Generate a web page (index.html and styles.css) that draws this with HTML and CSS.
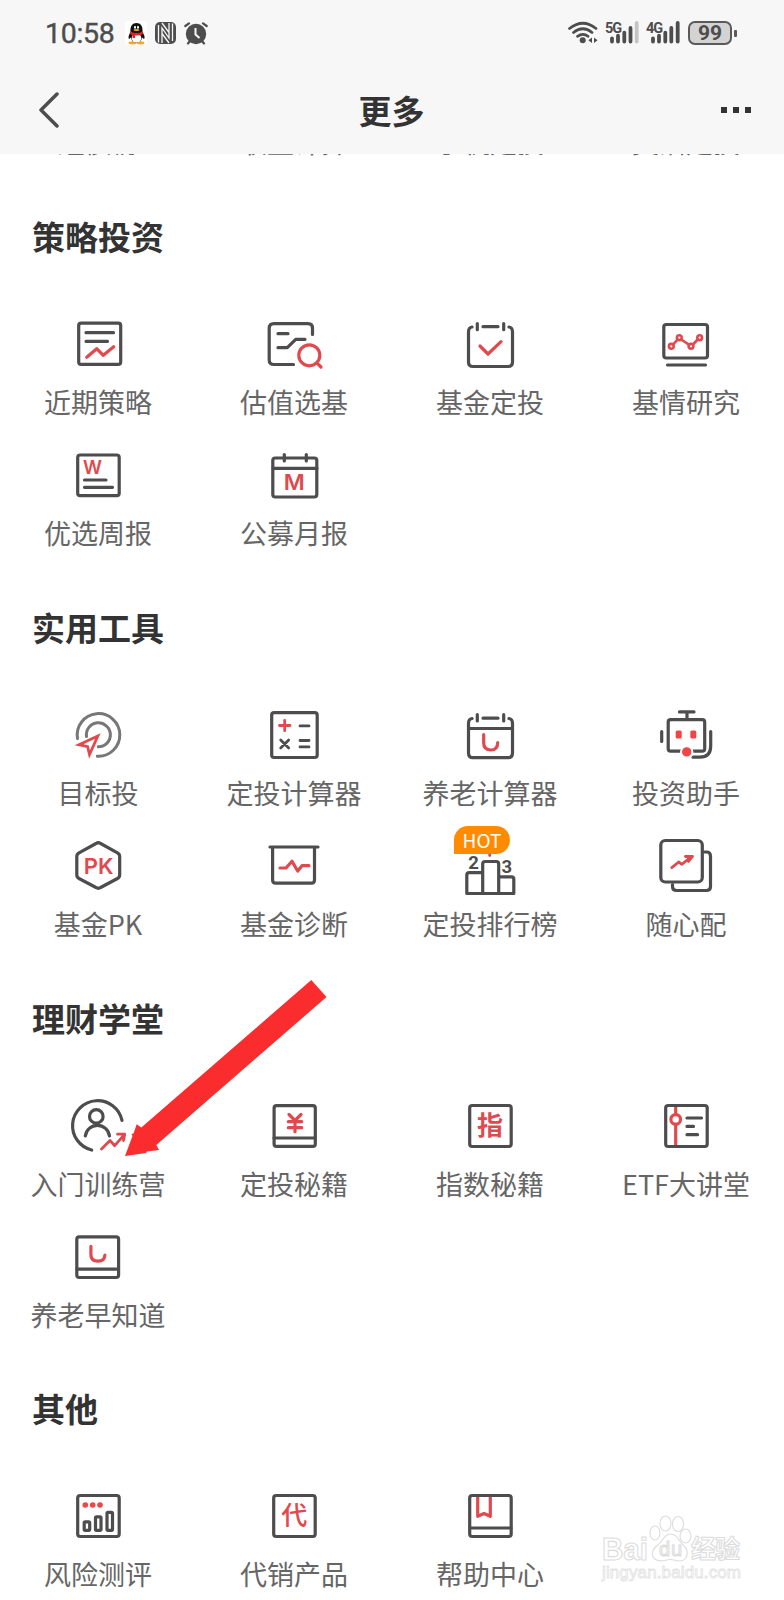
FILE: index.html
```html
<!DOCTYPE html>
<html lang="zh-CN">
<head>
    <meta charset="UTF-8">
    <meta name="viewport" content="width=device-width, initial-scale=1.0">
    <title>更多</title>
    <link rel="stylesheet" href="styles.css">
</head>
<body>
    <!-- 顶部：状态栏和标题栏 -->
    <div class="top">
        <div class="status">
            <span class="time">10:58</span>
            <svg class="qq" width="22" height="24" viewBox="0 0 22 24">
                <rect width="22" height="24" rx="4" fill="#fff"/>
                <ellipse cx="7.5" cy="21.8" rx="4" ry="1.6" fill="#f5a623"/>
                <ellipse cx="15.5" cy="21.8" rx="4" ry="1.6" fill="#f5a623"/>
                <path d="M5.5 11C5 5 7.500 2 11.500 2S18 5 17.500 11C20 15 20 17 19 18L17 16.500C16.500 20 14.500 21.500 11.500 21.500S6.500 20 6 16.500L4 18C3 17 3.500 14 5.500 11Z" fill="#111"/>
                <ellipse cx="11.500" cy="17" rx="4.800" ry="4.500" fill="#fff"/>
                <ellipse cx="10" cy="6.300" rx="1" ry="1.500" fill="#fff"/>
                <ellipse cx="13" cy="6.300" rx="1" ry="1.500" fill="#fff"/>
                <ellipse cx="11.500" cy="9" rx="3" ry="1" fill="#f5a623"/>
                <path d="M5.500 10.500Q11.500 14 17.500 10.500L18 13Q14 15 10 14.500V17H7.500V14L5 13Z" fill="#e32227"/>
            </svg>
            <svg class="nfc" width="21" height="22" viewBox="0 0 21 22">
                <rect width="21" height="22" rx="5" fill="#4d4d4d"/>
                <path d="M3.500 3V20.500M17.500 1.500V19M7 21V6L14 16V1M7 1L14 10.500M7 11.500L14 21" fill="none" stroke="#f7f7f7" stroke-width="1.300"/>
            </svg>
            <svg class="clock" width="24" height="23" viewBox="0 0 24 23">
                <circle cx="12" cy="12" r="10.200" fill="#4d4d4d"/>
                <path d="M1.300 4L5 1.300M22.700 4L19 1.300M4 21.500L6 19M20 21.500L18 19" stroke="#4d4d4d" stroke-width="2.200" stroke-linecap="round"/>
                <path d="M11.500 6V12.500L15.500 16" fill="none" stroke="#f7f7f7" stroke-width="2"/>
            </svg>
            <div class="status-right">
                <svg class="wifi" width="30" height="24" viewBox="0 0 30 24">
                    <g fill="none" stroke="#4d4d4d" stroke-width="2.700" stroke-linecap="round">
                        <path d="M1.500 7.500Q15 -3 28 7.500M5.500 11.500Q15 4 24 11.500M9.500 15.300Q15 11.300 20 15.300"/>
                    </g>
                    <circle cx="14.700" cy="19.300" r="3" fill="#4d4d4d"/>
                    <path d="M20.300 19.300L24 16.500V22ZM29.500 19.300L26 16.500V22Z" fill="#4d4d4d"/>
                </svg>
                <svg class="signal" width="34" height="24" viewBox="0 0 34 24">
                    <text x="0" y="12" class="net">5G</text>
                    <path d="M7 17.500V20.500M13 14.700V20.500M19.300 11.700V20.500M25.500 7V20.500" class="bar"/>
                    <path d="M31.700 2V20.500" class="bar bar-off"/>
                </svg>
                <svg class="signal" width="34" height="24" viewBox="0 0 34 24">
                    <text x="0" y="12" class="net">4G</text>
                    <path d="M7 17.500V20.500M13 14.700V20.500M19.300 11.700V20.500M25.300 7V20.500M31.700 2V20.500" class="bar"/>
                </svg>
                <div class="battery">99</div>
                <div class="battery-cap"></div>
            </div>
        </div>
        <div class="nav">
            <svg class="back" width="20" height="36" viewBox="0 0 20 36">
                <path d="M18 2L2 18L18 34" fill="none" stroke="#4d4d4d" stroke-width="3.500" stroke-linecap="round" stroke-linejoin="round"/>
            </svg>
            <h1>更多</h1>
            <div class="dots"><i></i><i></i><i></i></div>
        </div>
    </div>

    <!-- 可滚动的内容区 -->
    <div class="main">
        <div class="peek">
            <span>短债榜</span>
            <span>收益计算</span>
            <span>手机定投</span>
            <span>灵活定投</span>
        </div>

        <div class="section">
            <h2>策略投资</h2>
            <div class="grid">
                <div class="item">
                    <svg class="icon" viewBox="0 0 64 64">
                        <rect x="12.700" y="11.200" width="42" height="41.200" rx="2.500"/>
                        <path d="M20 20.700H47.500M20 29.300H41.500"/>
                        <path class="red" d="M20.700 45.300L30.700 36.700L37.300 43.300L47.700 34.700"/>
                    </svg>
                    <span>近期策略</span>
                </div>
                <div class="item">
                    <svg class="icon" viewBox="0 0 64 64">
                        <path d="M50.500 22.500V16.500Q50.500 11.700 46 11.700H12Q7.200 11.700 7.200 16.500V48Q7.200 52.500 12 52.500H31.500"/>
                        <path d="M16 21.700H26M16 35.700H25.300L33.700 27.300H43"/>
                        <circle class="red" cx="47.300" cy="43.300" r="10.500"/>
                        <path class="red" d="M55.300 51.300L59 55"/>
                    </svg>
                    <span>估值选基</span>
                </div>
                <div class="item">
                    <svg class="icon" viewBox="0 0 64 64">
                        <path d="M14 15Q10.500 15.500 10.500 20V50Q10.500 54.500 15 54.500H50Q54.500 54.500 54.500 50V20Q54.500 15.500 51 15M25 14.700H40M19.300 11.500V17.700M45.700 11.500V17.700"/>
                        <path class="red" d="M22 34L30 42L43 29.700"/>
                    </svg>
                    <span>基金定投</span>
                </div>
                <div class="item">
                    <svg class="icon" viewBox="0 0 64 64">
                        <rect x="9.800" y="12.500" width="43.700" height="33.500" rx="2.500"/>
                        <path d="M13.500 53H51.500"/>
                        <g class="dots-line">
                            <path d="M19.200 32.300L23.500 27.700M27.300 27.500L35.200 32.800M39 32.500L43.700 27.500"/>
                            <circle cx="17.300" cy="34.300" r="2.400"/>
                            <circle cx="25.300" cy="25.700" r="2.400"/>
                            <circle cx="37" cy="34.300" r="2.400"/>
                            <circle cx="45.700" cy="25.700" r="2.400"/>
                        </g>
                    </svg>
                    <span>基情研究</span>
                </div>
                <div class="item">
                    <svg class="icon" viewBox="0 0 64 64">
                        <rect x="11.700" y="12" width="41.500" height="40.700" rx="2.500"/>
                        <text class="letter" x="26.500" y="31.400" font-size="18.500" textLength="19" lengthAdjust="spacingAndGlyphs">W</text>
                        <path d="M18.500 37H40M18.500 44.300H46.500"/>
                    </svg>
                    <span>优选周报</span>
                </div>
                <div class="item">
                    <svg class="icon" viewBox="0 0 64 64">
                        <rect x="10.800" y="15" width="44" height="39" rx="2.500"/>
                        <path d="M11 25.300H55M22.300 11.500V18M44.300 11.500V18"/>
                        <text class="letter" x="32.300" y="47" font-size="21" textLength="21" lengthAdjust="spacingAndGlyphs">M</text>
                    </svg>
                    <span>公募月报</span>
                </div>
            </div>
        </div>

        <div class="section">
            <h2>实用工具</h2>
            <div class="grid">
                <div class="item">
                    <svg class="icon" viewBox="0 0 64 64">
                        <path class="soft" d="M11.500 35.500A21.300 21.300 0 1 1 31.300 53.200M20.500 33.500A12 12 0 1 1 32.300 43.800"/>
                        <path class="thin red" stroke-linejoin="miter" d="M31.800 33L13 41.700L21.600 43.600L23.500 51.500Z"/>
                    </svg>
                    <span>目标投</span>
                </div>
                <div class="item">
                    <svg class="icon" viewBox="0 0 64 64">
                        <rect x="9.700" y="9.700" width="45.500" height="44.800" rx="2.500"/>
                        <path class="thin red" d="M17.500 22.500H28M22.700 17.300V27.700"/>
                        <path class="thin" d="M38 22.900H47M18.700 36.900L26.700 44.900M26.700 36.900L18.700 44.900M38 37.500H47M38 43.900H47"/>
                    </svg>
                    <span>定投计算器</span>
                </div>
                <div class="item">
                    <svg class="icon" viewBox="0 0 64 64">
                        <path d="M14 15.500Q10.500 16 10.500 20.500V50Q10.500 54.700 15 54.700H50Q54.500 54.700 54.500 50V20.500Q54.500 16 51 15.500M25 15.200H40M19.300 11.700V18M45.700 11.700V18M11 25.500H54"/>
                        <path class="red" d="M25.700 31.500V40Q25.700 47 33 47Q39.500 47 39.700 39.700"/>
                    </svg>
                    <span>养老计算器</span>
                </div>
                <div class="item">
                    <svg class="icon" viewBox="0 0 64 64">
                        <path d="M25.500 8.900H40M33 9V16M7.700 28.500V38.500M56.700 28.500V43Q56.700 54.200 46 54.200H39"/>
                        <rect x="14.200" y="16.700" width="36.500" height="31.500" rx="2.500"/>
                        <rect class="fill" x="21.700" y="27.500" width="6" height="8" rx="1.500"/>
                        <rect class="fill" x="36.300" y="27.500" width="6" height="8" rx="1.500"/>
                        <circle class="mouth" cx="32.700" cy="48.900" r="5.700"/>
                    </svg>
                    <span>投资助手</span>
                </div>
                <div class="item">
                    <svg class="icon" viewBox="0 0 64 64">
                        <path d="M30 9.500Q32.300 8 34.600 9.500L51.500 18.800Q53.700 20 53.700 22.500V41Q53.700 43.300 51.500 44.500L34.600 53.500Q32.300 55 30 53.500L13 44.500Q10.800 43.300 10.800 41V22.500Q10.800 20 13 18.800Z"/>
                        <text class="letter" x="32.700" y="39.600" font-size="22">PK</text>
                    </svg>
                    <span>基金PK</span>
                </div>
                <div class="item">
                    <svg class="icon" viewBox="0 0 64 64">
                        <path d="M8 13H56M10.600 13V46Q10.600 49.200 13.600 49.200H49.500Q52.500 49.200 52.500 46V13"/>
                        <path class="red" d="M18 34H24L30 27.300L35.700 37L40 31.700H47"/>
                    </svg>
                    <span>基金诊断</span>
                </div>
                <div class="item">
                    <em class="hot">HOT</em>
                    <svg class="icon" viewBox="0 0 64 64">
                        <path d="M31.700 16V21.500" class="red thin"/>
                        <path stroke-linecap="butt" d="M24.700 59.700V30Q24.700 27.500 27.200 27.500H38.200Q40.700 27.500 40.700 30V59.700M24.700 38.700H11.300Q8.800 38.700 8.800 41V59.500H55.800V45Q55.800 42.900 53.500 42.900H40.700"/>
                        <text class="num" x="15.500" y="34.800">2</text>
                        <text class="num" x="48.800" y="38.800">3</text>
                    </svg>
                    <span>定投排行榜</span>
                </div>
                <div class="item">
                    <svg class="icon" viewBox="0 0 64 64">
                        <rect x="6.800" y="6.500" width="41.500" height="41.500" rx="4.500"/>
                        <path d="M50.500 18H52.500Q56.500 18 56.500 22V52.500Q56.500 56.500 52.500 56.500H22.500Q18.500 56.500 18.500 52.500V50.500"/>
                        <path class="red thin" d="M17.800 33.700L24.700 28L28 30.300L37 22.700M31.500 22.500H38.500L34.500 27.500"/>
                    </svg>
                    <span>随心配</span>
                </div>
            </div>
        </div>

        <div class="section">
            <h2>理财学堂</h2>
            <div class="grid">
                <div class="item">
                    <svg class="icon" viewBox="0 0 64 64">
                        <path d="M25.700 56A25 25 0 1 1 56 26.400"/>
                        <circle cx="30.300" cy="22.400" r="6.800"/>
                        <path d="M19.300 42A12.200 12.200 0 0 1 43.500 42"/>
                        <path class="red thin" d="M35.500 55L44 46.400L48.700 51.700L58.500 40.500M51.500 40.200H58.700L57.500 46.500"/>
                    </svg>
                    <span>入门训练营</span>
                </div>
                <div class="item">
                    <svg class="icon" viewBox="0 0 64 64">
                        <rect x="12.100" y="11.700" width="41.200" height="40.700" rx="2.500"/>
                        <path d="M12 44H53"/>
                        <path class="red" d="M27 20.500L33 26.500L39 20.500M33 27V37.700M26.300 27.700H39.700M26.300 33.700H39.700"/>
                    </svg>
                    <span>定投秘籍</span>
                </div>
                <div class="item">
                    <svg class="icon" viewBox="0 0 64 64">
                        <rect x="11.700" y="11.500" width="41.500" height="41" rx="2.500"/>
                        <text class="word" x="32" y="41.300">指</text>
                    </svg>
                    <span>指数秘籍</span>
                </div>
                <div class="item">
                    <svg class="icon" viewBox="0 0 64 64">
                        <rect x="11.700" y="11.500" width="41.500" height="41" rx="2.500"/>
                        <path class="red" stroke-linecap="butt" d="M21.700 13V51"/>
                        <circle class="red ring" cx="21.700" cy="25.400" r="4.800"/>
                        <path d="M33 24H47.500M33 32.400H39.500M33 40.700H43.500"/>
                    </svg>
                    <span>ETF大讲堂</span>
                </div>
                <div class="item">
                    <svg class="icon" viewBox="0 0 64 64">
                        <rect x="10.800" y="11.800" width="41.800" height="40.700" rx="2.500"/>
                        <path d="M11 44.100H52.500"/>
                        <path class="red" d="M24.900 21.300V29.500Q24.900 36.200 32 36.200Q38.700 36.200 38.900 30"/>
                    </svg>
                    <span>养老早知道</span>
                </div>
            </div>
        </div>

        <div class="section">
            <h2>其他</h2>
            <div class="grid">
                <div class="item">
                    <svg class="icon" viewBox="0 0 64 64">
                        <rect x="11.700" y="11.500" width="41.500" height="41" rx="2.500"/>
                        <circle class="fill" cx="19.300" cy="21" r="2.800"/>
                        <circle class="fill" cx="26.700" cy="21" r="2.800"/>
                        <circle class="fill" cx="34" cy="21" r="2.800"/>
                        <rect x="18.200" y="37.800" width="5.500" height="8.500" rx="1"/>
                        <rect x="29.500" y="32.800" width="5.500" height="13.500" rx="1"/>
                        <rect x="41" y="28.300" width="5.500" height="18" rx="1"/>
                    </svg>
                    <span>风险测评</span>
                </div>
                <div class="item">
                    <svg class="icon" viewBox="0 0 64 64">
                        <rect x="11.700" y="11.500" width="41.500" height="41" rx="2.500"/>
                        <text class="word word-light" x="32.300" y="41.300">代</text>
                    </svg>
                    <span>代销产品</span>
                </div>
                <div class="item">
                    <svg class="icon" viewBox="0 0 64 64">
                        <path class="red" d="M19.700 13V32.300L26 29.500L32.300 32.300V13"/>
                        <rect x="11.700" y="11.500" width="41.500" height="41" rx="2.500"/>
                        <path d="M12 44H53"/>
                    </svg>
                    <span>帮助中心</span>
                </div>
            </div>
        </div>
    </div>

    <!-- 指向入门训练营的红色箭头 -->
    <svg class="arrow" width="204" height="178" viewBox="0 0 204 178">
        <path d="M187.300 1L202.500 18L32.300 166L35 171L23 172.500L22 174L1 177L8.500 157L7.500 155L9.500 154.500L12.700 145.300L17.300 148.500Z" fill="#fb2c2e"/>
    </svg>

    <!-- 右下角水印 -->
    <svg class="mark" width="144" height="72" viewBox="0 0 144 72">
        <g fill="#fff" stroke="#dcdcdc" stroke-width="1.100">
            <text x="1" y="46" font-size="32" font-weight="700" textLength="46" lengthAdjust="spacingAndGlyphs">Bai</text>
            <ellipse cx="54" cy="19" rx="5" ry="7"/>
            <ellipse cx="64.500" cy="9.500" rx="5.500" ry="7.500"/>
            <ellipse cx="77" cy="10" rx="5.500" ry="7.500"/>
            <ellipse cx="84.500" cy="22" rx="5.500" ry="7"/>
            <path d="M70 20C77 20 78 28 82 31C88 36 88 46 79 47C75 47 73 45.500 69 45.500S62 48 57 46.500C49 44 50 36 57 31C62 27 63 20 70 20Z"/>
            <text x="58" y="42" font-size="20" textLength="23">du</text>
            <text x="90" y="44" font-size="25" font-weight="700" textLength="49">经验</text>
            <text x="1" y="64" font-size="17" stroke="#e2e2e2" stroke-width="0.800" textLength="139">jingyan.baidu.com</text>
        </g>
    </svg>
</body>
</html>
```
FILE: styles.css
```css
*{
    margin: 0;
    padding: 0;
    box-sizing: border-box;
}
body{
    width: 784px;
    height: 1600px;
    position: relative;
    overflow: hidden;
    background-color: #fff;
    font-family: "Noto Sans CJK SC", sans-serif;
}
.top{
    height: 154px;
    background-color: #f7f7f7;
}
/* 状态栏 */
.status{
    height: 66px;
    display: flex;
    align-items: center;
    padding: 0 47px 0 45px;
}
.time{
    width: 80px;
    padding-top: 1px;
    font: 400 28.5px/34px Roboto, sans-serif;
    letter-spacing: -0.3px;
    color: #4d4d4d;
    -webkit-text-stroke: 0.4px #4d4d4d;
}
.nfc{
    margin-left: 8px;
}
.clock{
    margin-left: 8px;
}
.status-right{
    display: flex;
    align-items: center;
    margin-left: auto;
}
.signal{
    margin-left: 7px;
}
.net{
    font: 700 14.5px Roboto, sans-serif;
    fill: #4d4d4d;
    letter-spacing: -1px;
}
.bar{
    fill: none;
    stroke: #4d4d4d;
    stroke-width: 3.8;
    stroke-linecap: round;
}
.bar-off{
    stroke: #c4c4c4;
}
.battery{
    width: 44px;
    height: 24px;
    margin-left: 8px;
    border: 2px solid #5a5a5a;
    border-radius: 7px;
    background-color: #d3d3d3;
    color: #4d4d4d;
    text-align: center;
    font: 700 21px/21px Roboto, sans-serif;
}
.battery-cap{
    width: 3px;
    height: 7px;
    margin-left: 2px;
    border-radius: 1px;
    background-color: #5a5a5a;
}
/* 标题栏 */
.nav{
    height: 88px;
    display: flex;
    align-items: center;
    justify-content: space-between;
    padding: 0 33px 0 39px;
}
.nav h1{
    font-size: 33px;
    line-height: 48px;
    font-weight: 700;
    color: #333;
    padding-left: 3px;
}
.dots{
    display: flex;
    gap: 6px;
}
.dots i{
    width: 6px;
    height: 6px;
    background-color: #333;
}
/* 内容 */
.main{
    height: 1446px;
    overflow: hidden;
}
.peek{
    height: 45px;
    display: grid;
    grid-template-columns: repeat(4, 1fr);
}
.peek span{
    height: 40px;
    margin-top: -32px;
    line-height: 40px;
    font-size: 27px;
    color: #666;
    text-align: center;
}
.section{
    height: 390.8px;
}
.section h2{
    height: 74px;
    padding-left: 32px;
    font-size: 33px;
    line-height: 74px;
    font-weight: 700;
    color: #333;
}
.grid{
    display: grid;
    grid-template-columns: repeat(4, 1fr);
    grid-auto-rows: 131.25px;
    padding-top: 39px;
}
.item{
    position: relative;
    display: flex;
    flex-direction: column;
    align-items: center;
}
.item span{
    margin-top: 6px;
    font-size: 27px;
    line-height: 40px;
    color: #666;
    white-space: nowrap;
}
/* 图标 */
.icon{
    width: 64px;
    height: 64px;
    fill: none;
    stroke: #4d4d4d;
    stroke-width: 3.2;
    stroke-linecap: round;
    stroke-linejoin: round;
}
.icon .red{
    stroke: #e04a4e;
}
.icon .thin{
    stroke-width: 2.8;
}
.icon .dots-line{
    stroke: #e04a4e;
    stroke-width: 2.6;
}
.icon .soft{
    stroke: #777;
    stroke-width: 3;
}
.icon .fill{
    fill: #f04447;
    stroke: none;
}
.icon .mouth{
    fill: #f04447;
    stroke: #fff;
    stroke-width: 2;
}
.icon .ring{
    fill: #fff;
}
.icon text{
    stroke: none;
    text-anchor: middle;
}
.letter{
    font-family: Inter, sans-serif;
    font-weight: 600;
    fill: #e04a4e;
}
.word{
    font-size: 26px;
    font-weight: 700;
    fill: #e04a4e;
}
.word-light{
    font-weight: 500;
}
.num{
    font: 700 18.5px Roboto, sans-serif;
    fill: #4d4d4d;
}
.hot{
    position: absolute;
    left: 62px;
    top: -8px;
    width: 56px;
    height: 28px;
    border-radius: 14px 14px 14px 0;
    background-color: #ff8c00;
    color: #fff;
    text-align: center;
    font-size: 19px;
    line-height: 27px;
    font-style: normal;
}
.arrow{
    position: absolute;
    left: 124px;
    top: 979px;
}
.mark{
    position: absolute;
    left: 601px;
    top: 1514px;
    font-family: "Liberation Sans", "Noto Sans CJK SC", sans-serif;
}
```
